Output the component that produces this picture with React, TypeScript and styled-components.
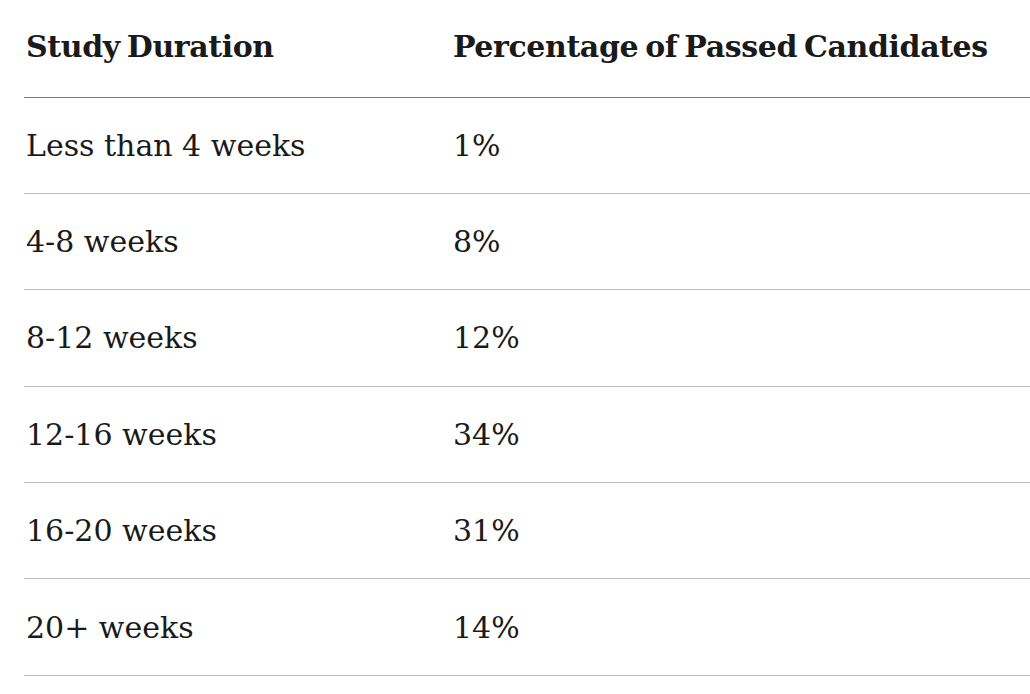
import React from 'react';
import styled, {createGlobalStyle} from "styled-components";

const rows = [
    {duration: 'Less than 4 weeks', percent: '1%'},
    {duration: '4-8 weeks', percent: '8%'},
    {duration: '8-12 weeks', percent: '12%'},
    {duration: '12-16 weeks', percent: '34%'},
    {duration: '16-20 weeks', percent: '31%'},
    {duration: '20+ weeks', percent: '14%'},
];

const App = () => {
    return (
        <>
            <GlobalStyle/>
            <Wrapper>
                <Table>
                    <thead>
                    <HeadRow>
                        <HeadCell $first>Study Duration</HeadCell>
                        <HeadCell>Percentage of Passed Candidates</HeadCell>
                    </HeadRow>
                    </thead>
                    <tbody>
                    {rows.map(row => (
                        <BodyRow key={row.duration}>
                            <Cell $first>{row.duration}</Cell>
                            <Cell>{row.percent}</Cell>
                        </BodyRow>
                    ))}
                    </tbody>
                </Table>
            </Wrapper>
        </>
    );
};

export default App;


const GlobalStyle = createGlobalStyle`
  body {
    margin: 0;
    background: #fff;
    color: #1a1a1a;
    font-family: "DejaVu Serif", serif;
    overflow: hidden;
  }
`

const Wrapper = styled.div`
  padding-left: 24px;
  width: 1040px;
`

const Table = styled.table`
  width: 100%;
  border-collapse: collapse;
`

const HeadRow = styled.tr`
  height: 97px;
  border-bottom: 1px solid #7a7a7a;
`

const HeadCell = styled.th<{ $first?: boolean }>`
  text-align: left;
  padding: 0 0 4px 2px;
  width: ${p => p.$first ? '425px' : 'auto'};
  font-size: 30px;
  font-weight: 700;
  letter-spacing: -0.4px;
  word-spacing: -3px;
  vertical-align: middle;
`

const BodyRow = styled.tr`
  height: 96.4px;
  border-bottom: 1px solid #bdbdbd;
`

const Cell = styled.td<{ $first?: boolean }>`
  padding: 0 0 0 2px;
  width: ${p => p.$first ? '425px' : 'auto'};
  font-size: 30px;
  vertical-align: middle;
`
